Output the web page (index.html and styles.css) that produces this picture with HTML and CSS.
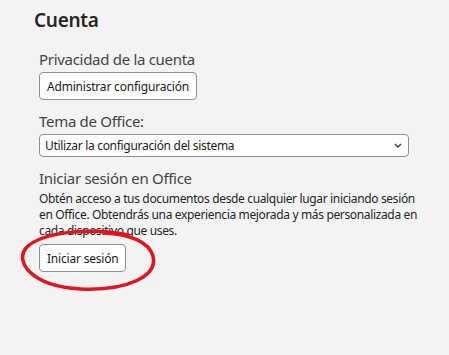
FILE: index.html
```html
<!DOCTYPE html>
<html lang="es">
<head>
    <meta charset="UTF-8">
    <title>Cuenta</title>
    <link rel="stylesheet" href="styles.css">
</head>
<body>
    <div class="page">
        <h1 class="page-title">Cuenta</h1>

        <div class="section">
            <h2 class="section-title">Privacidad de la cuenta</h2>
            <div class="btn-row">
                <button class="btn">Administrar configuración</button>
            </div>
        </div>

        <div class="section">
            <h2 class="section-title">Tema de Office:</h2>
            <div class="select">
                <span>Utilizar la configuración del sistema</span>
                <svg class="chevron" width="8" height="5" viewBox="0 0 8 5">
                    <path d="M1 1 L4 4 L7 1" fill="none" stroke="#333" stroke-width="1.3"/>
                </svg>
            </div>
        </div>

        <div class="section">
            <h2 class="section-title">Iniciar sesión en Office</h2>
            <p class="desc">Obtén acceso a tus documentos desde cualquier lugar iniciando sesión en Office. Obtendrás una experiencia mejorada y más personalizada en cada dispositivo que uses.</p>
            <div class="btn-row">
                <button class="btn">Iniciar sesión</button>
                <svg class="circle" width="140" height="66" viewBox="0 0 140 66">
                    <path d="M110 7 C 80 0, 25 2, 8 20 C -3 33, 12 58, 62 61 C 110 63, 140 48, 135 28 C 131 14, 112 6, 86 5" fill="none" stroke="#e3141b" stroke-width="3.5" stroke-linecap="round"/>
                </svg>
            </div>
        </div>
    </div>
</body>
</html>
```

FILE: styles.css
```css
* {
    margin: 0;
    padding: 0;
    box-sizing: border-box;
}

html,
body {
    min-height: 100vh;
}

body {
    background: #f3f3f3;
    font-family: 'Noto Sans', 'Open Sans', sans-serif;
    color: #262626;
    letter-spacing: -0.3px;
}

.page {
    padding: 7px 0 0 39px;
    width: 430px;
}

.page-title {
    font-size: 19px;
    font-weight: 600;
    line-height: 27px;
    margin-left: -5px;
    margin-bottom: 15px;
}

.section {
    margin-bottom: 11px;
}

.section-title {
    font-size: 15px;
    font-weight: 400;
    color: #444;
    line-height: 20px;
    margin-bottom: 3px;
}

.btn-row {
    display: flex;
    position: relative;
}

.btn {
    font-family: inherit;
    letter-spacing: -0.2px;
    font-size: 12px;
    color: #1b1b1b;
    background: #fff;
    border: 1px solid #8f8f8f;
    border-radius: 4px;
    height: 28px;
    padding: 0 7px;
}

.select {
    display: flex;
    align-items: center;
    justify-content: space-between;
    width: 370px;
    height: 23px;
    background: #fff;
    border: 1px solid #8f8f8f;
    border-radius: 4px;
    padding: 0 6px 0 5px;
    font-size: 12px;
    color: #1b1b1b;
}

.desc {
    font-size: 12px;
    line-height: 16px;
    color: #262626;
    margin-bottom: 5px;
    width: 388px;
    letter-spacing: -0.35px;
}

.circle {
    position: absolute;
    left: -21px;
    top: -16px;
}
```
